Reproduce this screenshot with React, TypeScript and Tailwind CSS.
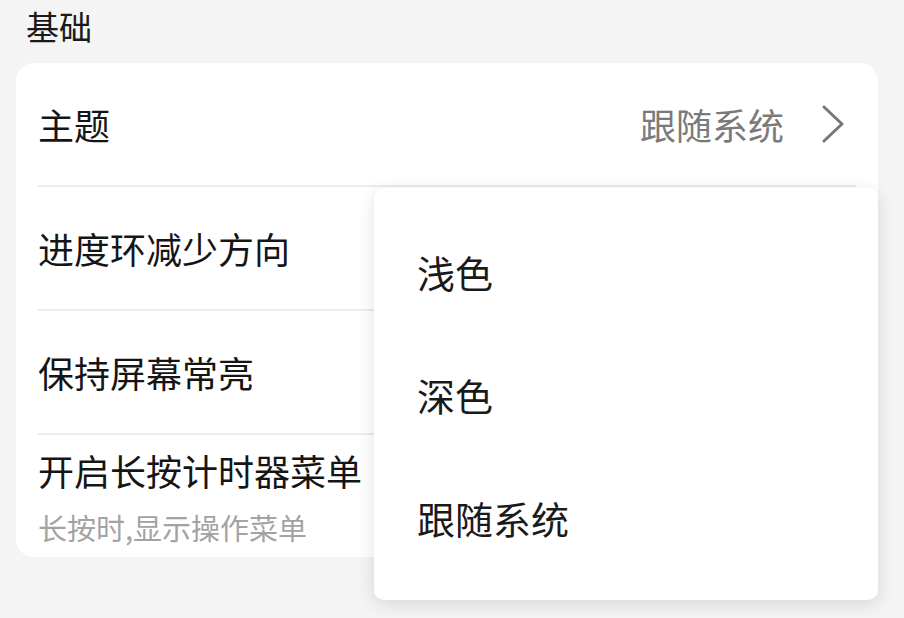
const font = { fontFamily: '"Noto Sans CJK SC", "Noto Sans", sans-serif' };

function Row({ title, sub, right, last }: { title: string; sub?: string; right?: string; last?: boolean }) {
  return (
    <div className={`mx-[22px] flex items-center ${last ? "h-[122px]" : "h-[124px] border-b-2 border-[#ececec]"}`}>
      <div className="flex flex-1 flex-col">
        <span className="text-[36px] leading-[44px] text-[#151515]">{title}</span>
        {sub && <span className="mt-[18px] text-[29px] leading-[34px] text-[#a3a3a3]">{sub}</span>}
      </div>
      {right && (
        <div className="flex items-center gap-[38px] text-[#7a7a7a]">
          <span className="text-[36px] leading-[44px]">{right}</span>
          <svg width="22" height="38" viewBox="0 0 22 38" className="mr-[12px]">
            <path d="M2 2 L20 19 L2 36" fill="none" stroke="#777777" strokeWidth="3" strokeLinecap="round" strokeLinejoin="round" />
          </svg>
        </div>
      )}
    </div>
  );
}

export default function App() {
  const options = ["浅色", "深色", "跟随系统"];
  return (
    <div className="relative h-[618px] w-[904px] overflow-hidden bg-[#f4f4f4]" style={font}>
      <div className="h-[63px] pl-[26px] pt-[7px] text-[33px] leading-[38px] text-[#1a1a1a]">基础</div>

      <div className="ml-[16px] mr-[26px] rounded-[18px] bg-white">
        <Row title="主题" right="跟随系统" />
        <Row title="进度环减少方向" />
        <Row title="保持屏幕常亮" />
        <Row title="开启长按计时器菜单" sub="长按时,显示操作菜单" last />
      </div>

      {/* theme picker popup */}
      <div className="absolute left-[374px] top-[188px] h-[412px] w-[504px] rounded-[10px] bg-white pt-[22px] shadow-[0_4px_18px_rgba(0,0,0,0.12)]">
        {options.map((o) => (
          <div key={o} className="flex h-[123px] items-center pl-[43px] text-[38px] text-[#1a1a1a]">
            {o}
          </div>
        ))}
      </div>
    </div>
  );
}
